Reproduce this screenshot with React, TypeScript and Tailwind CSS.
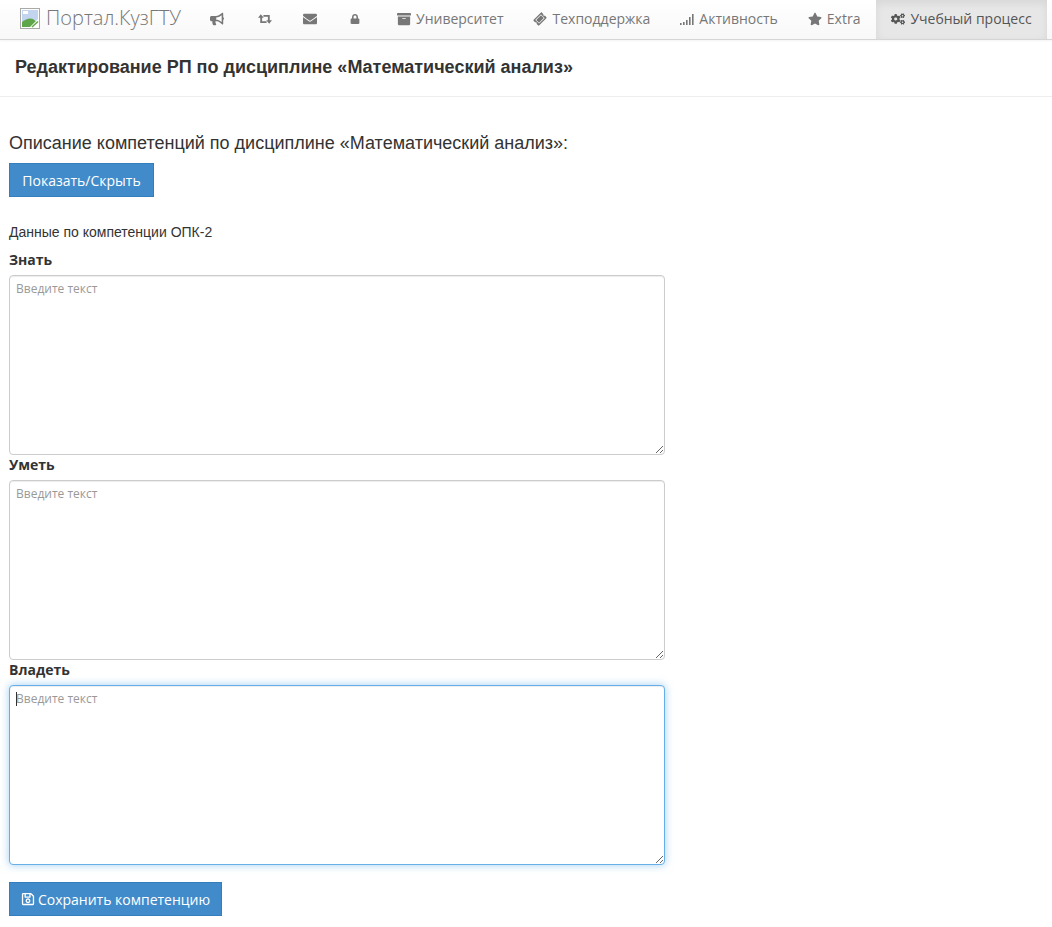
import type { ReactNode } from 'react';
import { FaArchive, FaBullhorn, FaCogs, FaEnvelope, FaLock, FaRegSave, FaStar, FaTicketAlt } from 'react-icons/fa';

function SignalIcon() {
  return (
    <svg width="14" height="14" viewBox="0 0 14 14" fill="currentColor">
      <rect x="0" y="11" width="1.6" height="2" />
      <rect x="3" y="10" width="1.6" height="3" />
      <rect x="6" y="8" width="1.6" height="5" />
      <rect x="9" y="5" width="1.6" height="8" />
      <rect x="12" y="2" width="1.6" height="11" />
    </svg>
  );
}

function RetweetIcon() {
  return (
    <svg width="15" height="14" viewBox="0 0 15 14" fill="currentColor">
      <path d="M3 2 L6.2 5.6 L4.4 5.6 L4.4 9.4 L9.2 9.4 L9.2 11.4 L2.4 11.4 L2.4 5.6 L0 5.6 Z" />
      <path d="M12 12 L8.8 8.4 L10.6 8.4 L10.6 4.6 L5.8 4.6 L5.8 2.6 L12.6 2.6 L12.6 8.4 L15 8.4 Z" />
    </svg>
  );
}

function BrokenImage() {
  return (
    <svg width="20" height="21" viewBox="0 0 20 21" className="shrink-0">
      <rect x="0.5" y="0.5" width="19" height="20" fill="#fff" stroke="#a9a9a9" />
      <rect x="2" y="2" width="16" height="17" fill="#c3d4ef" />
      <path d="M2 19 L2 14 Q8 9 13 11 L18 15 L18 19 Z" fill="#5fa64a" />
      <path d="M10 19 L18 11 L18 19 Z" fill="#fff" />
      <path d="M12 19 L18 13.5" stroke="#5fa64a" strokeWidth="1.5" />
      <rect x="3" y="3" width="5" height="3" fill="#fff" />
    </svg>
  );
}

function NavItem({ icon, label, active, width }: { icon: ReactNode; label?: string; active?: boolean; width?: string }) {
  return (
    <a
      className={`flex h-[39px] items-center gap-[5px] px-[15px] pb-[2px] text-[14px] ${width ?? ''} ${
        active ? 'ml-px bg-[#e7e7e7] text-[#555] shadow-[inset_0_3px_9px_rgba(0,0,0,0.075)]' : 'text-[#777]'
      }`}
    >
      <span className="flex w-[14px] shrink-0 justify-start">{icon}</span>
      {label && <span>{label}</span>}
    </a>
  );
}

function Field({ label, focused }: { label: string; focused?: boolean }) {
  return (
    <div className="relative">
      <label className="mb-[5px] block text-[14px] leading-[20px] font-bold text-[#333]">{label}</label>
      <textarea
        autoFocus={focused}
        placeholder="Введите текст"
        className={`block h-[180px] w-[656px] rounded-[4px] border bg-white px-[6px] py-[4px] text-[12px] leading-[17px] text-[#555] caret-transparent outline-none placeholder:text-[#999] ${
          focused
            ? 'border-[#66afe9] shadow-[inset_0_1px_1px_rgba(0,0,0,0.075),0_0_8px_rgba(102,175,233,0.6)]'
            : 'border-[#ccc] shadow-[inset_0_1px_1px_rgba(0,0,0,0.075)]'
        }`}
      />
      {focused && <span className="absolute top-[32px] left-[7px] h-[14px] w-px bg-[#333]" />}
    </div>
  );
}

export default function App() {
  return (
    <div className="min-h-[927px] bg-white font-['Open_Sans',sans-serif] text-[#333]">
      <nav className="flex h-[40px] border-b border-[#d5d5d5] bg-gradient-to-b from-white to-[#f8f8f8] pl-[20px] shadow-[0_1px_2px_rgba(0,0,0,0.05)]">
        <a className="flex h-[39px] w-[175px] items-center gap-[6px] pb-[3px] text-[20px] font-light text-[#777]">
          <BrokenImage />
          <span>Портал.КузГТУ</span>
        </a>
        <NavItem icon={<FaBullhorn size={14} />} width="w-[48px]" />
        <NavItem icon={<RetweetIcon />} width="w-[45px]" />
        <NavItem icon={<FaEnvelope size={14} />} width="w-[47px]" />
        <NavItem icon={<FaLock size={10} />} width="w-[47px]" />
        <NavItem icon={<FaArchive size={14} />} label="Университет" />
        <NavItem icon={<FaTicketAlt size={12} className="-rotate-45" />} label="Техподдержка" />
        <NavItem icon={<SignalIcon />} label="Активность" />
        <NavItem icon={<FaStar size={14} />} label="Extra" />
        <NavItem icon={<FaCogs size={16} />} label="Учебный процесс" active />
      </nav>

      <div className="flex h-[57px] items-center border-b border-[#eee] px-[15px] pb-[2px] font-['Liberation_Sans',sans-serif] text-[18px] font-bold">
        Редактирование РП по дисциплине «Математический анализ»
      </div>

      <main className="px-[9px]">
        <h3 className="mt-[36px] font-['Liberation_Sans',sans-serif] text-[18px] leading-[20px]">
          Описание компетенций по дисциплине «Математический анализ»:
        </h3>
        <button className="mt-[10px] block h-[34px] w-[145px] border border-[#357ebd] bg-[#428bca] text-[14px] text-white">
          Показать/Скрыть
        </button>
        <p className="mt-[25px] font-['Liberation_Sans',sans-serif] text-[14px] leading-[20px]">
          Данные по компетенции ОПК-2
        </p>
        <div className="mt-[8px] flex flex-col">
          <Field label="Знать" />
          <Field label="Уметь" />
          <Field label="Владеть" focused />
        </div>
        <button className="mt-[17px] flex h-[34px] w-[213px] items-center justify-center gap-[3px] border border-[#357ebd] bg-[#428bca] text-[14px] text-white">
          <FaRegSave size={14} />
          Сохранить компетенцию
        </button>
      </main>
    </div>
  );
}
